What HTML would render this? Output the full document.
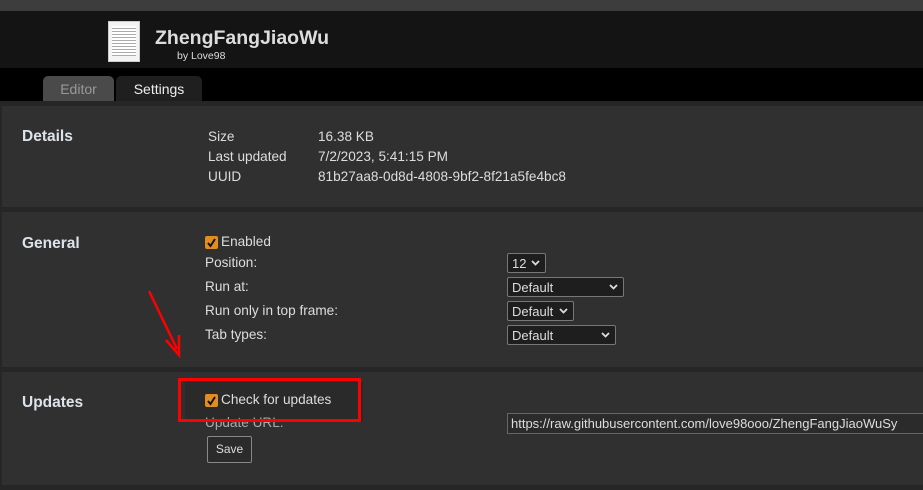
<!DOCTYPE html>
<html><head><style>
*{margin:0;padding:0;box-sizing:border-box}
body{width:923px;height:490px;overflow:hidden;background:#262626;font-family:"Liberation Sans",Arial,sans-serif;color:#ddd;position:relative;font-size:14px}
.a{position:absolute}
.sec{position:absolute;left:2px;right:0;background:#303030}
.h{position:absolute;left:20px;font-weight:bold;font-size:15.5px;color:#dde3ea}
.t{position:absolute;font-size:13.6px;color:#ddd;white-space:nowrap}
.sel{position:absolute;height:20px;background:#1e1e1e;border:1px solid #777;border-radius:2px;color:#ddd;font-size:13px;padding:2px 0 0 4px}
.sel svg{position:absolute;right:5px;top:6px}
.cb{position:absolute;width:13px;height:13px;background:#e08e24;border-radius:2px}
</style></head><body>
<div class="a" style="left:0;top:0;width:923px;height:11px;background:#3d3d3d"></div>
<div class="a" style="left:0;top:11px;width:923px;height:57px;background:#141414"></div>
<div class="a" style="left:0;top:68px;width:923px;height:33px;background:#000"></div>
<div class="a" style="left:108px;top:21px;width:32px;height:41px;background:#f4f4f4;border:1px solid #ccc">
<div style="margin:4px 3px;height:30px;background:repeating-linear-gradient(#fff 0 2px,#aaa 2px 3px)"></div></div>
<div class="a" style="left:155px;top:27px;font-size:19.5px;font-weight:bold;color:#ddd">ZhengFangJiaoWu</div>
<div class="a" style="left:177px;top:50px;font-size:10.5px;color:#ddd">by Love98</div>
<div class="a" style="left:43px;top:76px;width:71px;height:25px;background:#4a4a4a;border-radius:5px 5px 0 0;color:#999;font-size:14px;text-align:center;line-height:26px">Editor</div>
<div class="a" style="left:116px;top:76px;width:86px;height:25px;background:#1f1f1f;border-radius:5px 5px 0 0;color:#eee;font-size:14px;text-align:center;line-height:26px">Settings</div>

<div class="sec" style="top:106px;height:101px">
<div class="h" style="top:22px">Details</div>
<div class="t" style="left:206px;top:23px">Size</div><div class="t" style="left:316px;top:23px">16.38 KB</div>
<div class="t" style="left:206px;top:43px">Last updated</div><div class="t" style="left:316px;top:43px">7/2/2023, 5:41:15 PM</div>
<div class="t" style="left:206px;top:63px">UUID</div><div class="t" style="left:316px;top:63px">81b27aa8-0d8d-4808-9bf2-8f21a5fe4bc8</div>
</div>

<div class="sec" style="top:212px;height:155px">
<div class="h" style="top:23px">General</div>
<div class="cb" style="left:203px;top:24px"><svg width="13" height="13"><path d="M3 7l2.5 3L10 3" stroke="#111" stroke-width="2" fill="none"/></svg></div>
<div class="t" style="left:219px;top:22px">Enabled</div>
<div class="t" style="left:203px;top:43px">Position:</div>
<div class="t" style="left:203px;top:67px">Run at:</div>
<div class="t" style="left:203px;top:91px">Run only in top frame:</div>
<div class="t" style="left:203px;top:115px">Tab types:</div>
<div class="sel" style="left:505px;top:41px;width:39px">12<svg width="9" height="6"><path d="M1 1l3.5 3.5L8 1" stroke="#ddd" stroke-width="1.8" fill="none"/></svg></div>
<div class="sel" style="left:505px;top:65px;width:117px">Default<svg width="9" height="6"><path d="M1 1l3.5 3.5L8 1" stroke="#ddd" stroke-width="1.8" fill="none"/></svg></div>
<div class="sel" style="left:505px;top:89px;width:67px">Default<svg width="9" height="6"><path d="M1 1l3.5 3.5L8 1" stroke="#ddd" stroke-width="1.8" fill="none"/></svg></div>
<div class="sel" style="left:505px;top:113px;width:109px">Default<svg width="9" height="6"><path d="M1 1l3.5 3.5L8 1" stroke="#ddd" stroke-width="1.8" fill="none"/></svg></div>
</div>

<div class="sec" style="top:372px;height:113px">
<div class="h" style="top:22px">Updates</div>
<div class="a" style="left:183px;top:10px;width:178px;height:40px;background:#2a2a2a"></div>
<div class="t" style="left:203px;top:43px;color:#aaa">Update URL:</div>
<div class="a" style="left:176px;top:6px;width:183px;height:44px;border:3px solid #ff0000"></div>
<div class="cb" style="left:203px;top:22px"><svg width="13" height="13"><path d="M3 7l2.5 3L10 3" stroke="#111" stroke-width="2" fill="none"/></svg></div>
<div class="t" style="left:219px;top:20px">Check for updates</div>
<div class="a" style="left:505px;top:41px;width:420px;height:21px;border:1px solid #666;background:#2b2b2b;font-size:13px;padding:2px 0 0 3px;white-space:nowrap;overflow:hidden;color:#ddd">https://raw.githubusercontent.com/love98ooo/ZhengFangJiaoWuSy</div>
<div class="a" style="left:205px;top:64px;width:45px;height:27px;border:1px solid #888;border-radius:2px;background:#2b2b2b;font-size:12px;text-align:center;line-height:25px;color:#ddd">Save</div>
</div>

<svg class="a" style="left:140px;top:285px" width="50" height="75"><path d="M9 6L37 64" stroke="#f00" stroke-width="2.5"/><path d="M26 55L39 70L39 50" stroke="#f00" stroke-width="2.5" fill="none"/></svg>
</body></html>
